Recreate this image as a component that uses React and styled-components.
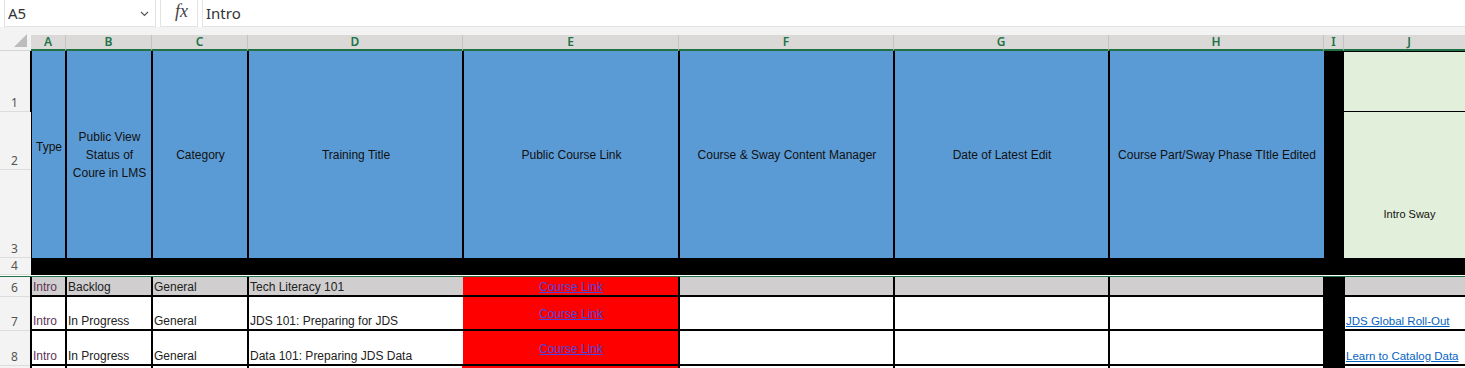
import React from 'react';
import styled, { createGlobalStyle } from 'styled-components';

const GlobalStyle = createGlobalStyle`
  html, body { margin: 0; padding: 0; background: #fff; overflow: hidden; }
  body { font-family: "Liberation Sans", Arial, sans-serif; }
`;

const LETTERS = ['A', 'B', 'C', 'D', 'E', 'F', 'G', 'H', 'I', 'J'];

// header cells for columns A..H (merged rows 1-3)
const HEADERS = [
  { text: 'Type', nudge: 16 },
  { text: 'Public View\nStatus of\nCoure in LMS' },
  { text: 'Category' },
  { text: 'Training Title' },
  { text: 'Public Course Link' },
  { text: 'Course & Sway Content Manager' },
  { text: 'Date of Latest Edit' },
  { text: 'Course Part/Sway Phase TItle Edited' },
];

const ROWS = [
  { n: 6, shade: true, cells: ['Intro', 'Backlog', 'General', 'Tech Literacy 101'], link: '' },
  { n: 7, cells: ['Intro', 'In Progress', 'General', 'JDS 101: Preparing for JDS'], link: 'JDS Global Roll-Out' },
  { n: 8, cells: ['Intro', 'In Progress', 'General', 'Data 101: Preparing JDS Data'], link: 'Learn to Catalog Data' },
];

export default function App() {
  return (
    <>
      <GlobalStyle />
      <Page>
        <FormulaBar>
          <NameBox>
            <span>A5</span>
            <svg width="9" height="6" viewBox="0 0 9 6">
              <polyline points="1,1 4.5,4.5 8,1" fill="none" stroke="#555" strokeWidth="1.2" />
            </svg>
          </NameBox>
          <FxBox>fx</FxBox>
          <FormulaInput>Intro</FormulaInput>
        </FormulaBar>

        <Sheet>
          {/* column header row */}
          <Corner>
            <svg width="14" height="14" viewBox="0 0 14 14">
              <polygon points="13,0 13,13 0,13" fill="#bdbdbd" />
            </svg>
          </Corner>
          {LETTERS.map((l) => (
            <ColHead key={l}>{l}</ColHead>
          ))}

          {/* rows 1-3: the big blue header */}
          <RowHead>1</RowHead>
          {HEADERS.map((h, i) => (
            <HeadCell key={i} $nudge={h.nudge || 0}>{h.text}</HeadCell>
          ))}
          <Spine $span={3} />
          <SwayTop />
          <RowHead>2</RowHead>
          <SwayBody>Intro Sway</SwayBody>
          <RowHead>3</RowHead>

          {/* row 4: black band, row 5 hidden */}
          <RowHead>4</RowHead>
          <Band />
          <HiddenRow />

          {ROWS.map((r) => {
            const bg = r.shade ? '#d0cece' : '#fff';
            return (
              <React.Fragment key={r.n}>
                <RowHead>{r.n}</RowHead>
                {r.cells.map((c, i) => (
                  <Cell key={i} $bg={bg} $first={i === 0}>
                    {c}
                  </Cell>
                ))}
                <LinkCell>
                  <LinkText $tone="#4a46dc">Course Link</LinkText>
                </LinkCell>
                <Cell $bg={bg} />
                <Cell $bg={bg} />
                <Cell $bg={bg} />
                <Cell $bg="#000" />
                <Cell $bg={bg}>
                  {r.link && <LinkText $tone="#0563c1" $size={11.5}>{r.link}</LinkText>}
                </Cell>
              </React.Fragment>
            );
          })}

          <RowHead />
          {LETTERS.map((l) => (
            <Cell
              key={l}
              $bg={l === 'I' ? '#000' : l === 'E' ? '#ff0000' : '#fff'}
              $edge={l === 'E' ? '#ff0000' : '#000'}
            />
          ))}
        </Sheet>
      </Page>
    </>
  );
}

const Page = styled.div`
  width: 1465px;
  height: 368px;
  overflow: hidden;
  background: #fff;
`;

const FormulaBar = styled.div`
  display: flex;
  gap: 4px;
  height: 35px;
  box-sizing: border-box;
  padding: 0 0 8px 4px;
  background: linear-gradient(#fff 27px, #f3f3f3 27px);
  font-family: "Noto Sans", "Open Sans", sans-serif;
  color: #333;
`;

const Box = styled.div`
  box-sizing: border-box;
  height: 27px;
  background: #fff;
  border: 1px solid #e3e3e3;
  border-top: none;
  display: flex;
  align-items: center;
`;

const NameBox = styled(Box)`
  width: 152px;
  padding: 0 6px 0 3px;
  justify-content: space-between;
  font-size: 15px;
  svg { margin-top: 1px; }
`;

const FxBox = styled(Box)`
  width: 38px;
  justify-content: center;
  padding: 0 0 3px 5px;
  font-family: "Liberation Serif", "DejaVu Serif", serif;
  font-style: italic;
  font-size: 18px;
  color: #444;
`;

const FormulaInput = styled(Box)`
  flex: 1;
  padding-left: 3px;
  font-size: 15px;
  border-right: none;
`;

const Sheet = styled.div`
  display: grid;
  grid-template-columns: 31px 35px 86px 96px 215px 216px 215px 215px 215px 20px 131px;
  grid-template-rows: 16px 61px 58px 88px 17px 2px 20px 34px 35px 30px;
  width: 1475px;
`;

const Corner = styled.div`
  background: #f3f3f3;
  border-bottom: 1px solid #d6d6d6;
  box-sizing: border-box;
  display: flex;
  align-items: flex-end;
  justify-content: flex-end;
  padding: 0 3px 2px 0;
`;

const ColHead = styled.div`
  box-sizing: border-box;
  background: #dad9d8;
  border-right: 1px solid #c3c3c3;
  border-bottom: 2px solid #217346;
  color: #217346;
  font-family: "Noto Sans", "Open Sans", sans-serif;
  font-weight: 600;
  font-size: 12px;
  line-height: 14px;
  text-align: center;
`;

const RowHead = styled.div`
  box-sizing: border-box;
  background: #f3f3f3;
  border-bottom: 1px solid #dcdcdc;
  display: flex;
  align-items: flex-end;
  justify-content: center;
  padding: 0 2px 1px 0;
  font-family: "Noto Sans", "Open Sans", sans-serif;
  font-size: 12px;
  line-height: 14px;
  color: #555;
`;

const HeadCell = styled.div`
  grid-row: span 3;
  box-sizing: border-box;
  background: #5b9bd5;
  border-left: 2px solid #000;
  margin-left: -1px;
  display: flex;
  align-items: center;
  justify-content: center;
  text-align: center;
  white-space: pre-line;
  padding: 0 1px ${({ $nudge }) => $nudge}px;
  font-size: 12px;
  line-height: 18px;
  color: #111;
`;

const Spine = styled.div`
  grid-row: span ${({ $span }) => $span};
  background: #000;
`;

const SwayTop = styled.div`
  box-sizing: border-box;
  background: #e2efda;
  border-top: 1px solid #000;
  border-bottom: 1px solid #000;
`;

const SwayBody = styled.div`
  grid-row: span 2;
  box-sizing: border-box;
  background: #e2efda;
  padding-top: 96px;
  text-align: center;
  font-size: 11px;
  color: #111;
`;

const Band = styled.div`
  grid-column: span 10;
  background: #000;
`;

const HiddenRow = styled.div`
  grid-column: span 11;
  box-sizing: border-box;
  border-top: 1px solid #fff;
  border-bottom: 1px solid #217346;
`;

const Cell = styled.div`
  box-sizing: border-box;
  background: ${({ $bg }) => $bg};
  border-left: 2px solid ${({ $edge }) => $edge || '#000'};
  border-bottom: 2px solid #000;
  margin-left: -1px;
  display: flex;
  align-items: flex-end;
  padding: 0 0 1px 1px;
  font-size: 12px;
  line-height: 14px;
  color: ${({ $first }) => ($first ? '#5e3458' : '#222')};
  white-space: nowrap;
  overflow: hidden;
`;

const LinkCell = styled.div`
  box-sizing: border-box;
  background: #ff0000;
  border-bottom: 2px solid #000;
  display: flex;
  align-items: center;
  justify-content: center;
  padding-top: 2px;
  line-height: 14px;
`;

const LinkText = styled.span`
  color: ${({ $tone }) => $tone};
  text-decoration: underline;
  font-size: ${({ $size }) => $size || 12}px;
`;
